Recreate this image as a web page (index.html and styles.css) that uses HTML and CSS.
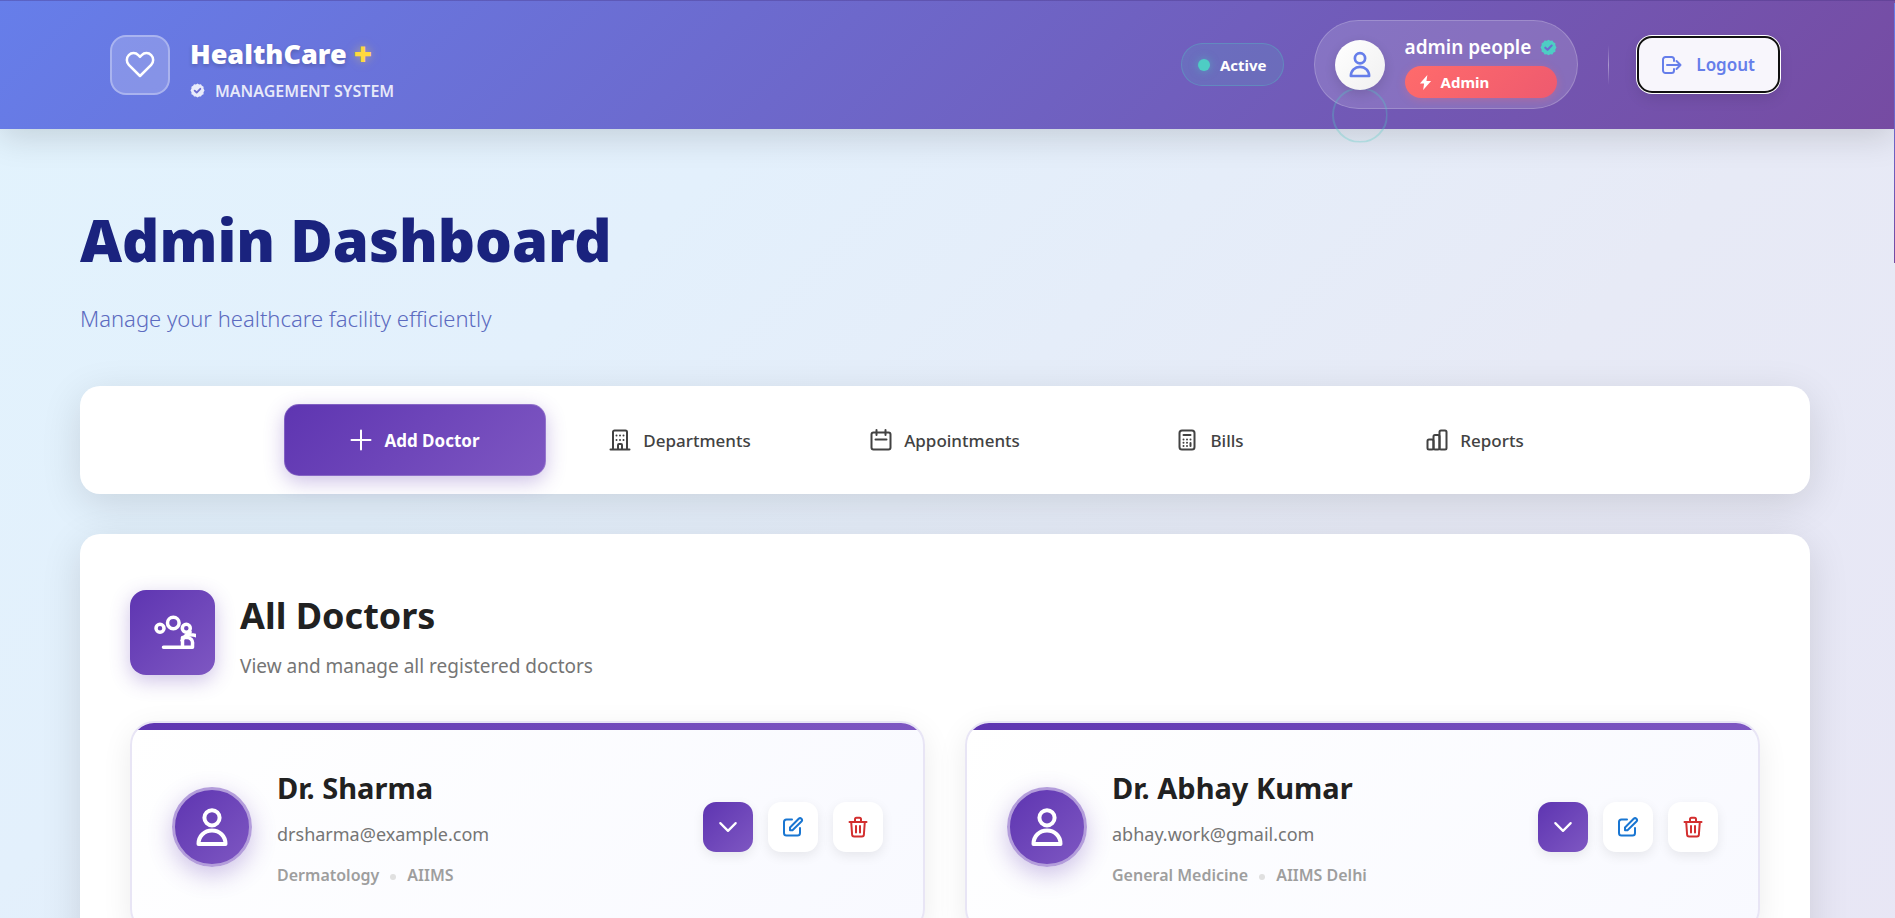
FILE: index.html
```html
<!DOCTYPE html>
<html lang="en">
<head>
<meta charset="utf-8">
<title>Admin Dashboard</title>
<link rel="stylesheet" href="styles.css">
</head>
<body>
<svg class="sprite" aria-hidden="true">
  <defs>
    <symbol id="i-user" viewBox="0 0 32 40"><circle cx="16" cy="10.800" r="7.600"/><path d="M2.500 37C2.500 29 8.500 23.500 16 23.500S29.500 29 29.500 37Z"/></symbol>
    <symbol id="i-check" viewBox="0 0 16 16"><path class="solid" d="M8 .6l1.700 1 2-.3 1 1.700 1.800.9-.1 2L15.500 8l-1.100 1.900.1 2-1.800.9-1 1.700-2-.2L8 15.400l-1.700-1.100-2 .2-1-1.700-1.800-.9.1-2L.5 8l1.100-2.100-.1-2L3.300 3l1-1.700 2 .3z"/><path class="tick" d="M5 8.200l2.100 2 3.900-4"/></symbol>
    <symbol id="i-down" viewBox="0 0 20 20"><path d="M3 6.500l7 7 7-7"/></symbol>
    <symbol id="i-edit" viewBox="0 0 22 22"><path d="M10 3.500H4.500A2.500 2.500 0 0 0 2 6v11a2.500 2.500 0 0 0 2.500 2.500h11A2.500 2.500 0 0 0 18 17V12"/><path d="M8 11.500l8.700-8.700a1.900 1.900 0 0 1 2.700 2.700L10.500 14.200H8z"/></symbol>
    <symbol id="i-trash" viewBox="0 0 20 22"><path d="M1.500 6h17M3.200 6l.9 12.500a2 2 0 0 0 2 2h7.800a2 2 0 0 0 2-2L16.800 6M7 6V3.200a1.500 1.500 0 0 1 1.500-1.500h3A1.500 1.500 0 0 1 13 3.200V6M8 10v6.500M12 10v6.500"/></symbol>
  </defs>
</svg>

<header class="topbar">
  <div class="brand">
    <div class="brand-icon">
      <svg viewBox="0 0 30 27"><path d="M15 25L3.800 13.800a7 7 0 0 1 0-9.700 6.600 6.600 0 0 1 9.500 0L15 5.800l1.700-1.700a6.600 6.600 0 0 1 9.500 0 7 7 0 0 1 0 9.700z"/></svg>
    </div>
    <div class="brand-text">
      <div class="brand-name">HealthCare <span class="plus">+</span></div>
      <div class="brand-sub"><svg><use href="#i-check"/></svg>MANAGEMENT SYSTEM</div>
    </div>
  </div>
  <div class="account">
    <div class="status"><span class="status-dot"></span>Active</div>
    <div class="profile">
      <div class="profile-pic"><svg><use href="#i-user"/></svg></div>
      <div class="profile-info">
        <div class="profile-name">admin people <svg><use href="#i-check"/></svg></div>
        <div class="role"><svg viewBox="0 0 12 16"><path d="M8 0L0 9h4.500L3.500 16 12 6.500H7z"/></svg>Admin</div>
      </div>
    </div>
    <span class="divider"></span>
    <button class="logout" type="button">
      <svg viewBox="0 0 20 18"><path d="M12 5V3.500A2.500 2.500 0 0 0 9.500 1h-6A2.500 2.500 0 0 0 1 3.500v11A2.500 2.500 0 0 0 3.500 17h6a2.500 2.500 0 0 0 2.500-2.500V13M5 9h13.500M14.500 5l4 4-4 4"/></svg>Logout
    </button>
  </div>
</header>

<main class="page">
  <h1>Admin Dashboard</h1>
  <p class="lead">Manage your healthcare facility efficiently</p>

  <nav class="tabs">
    <div class="tabs-inner">
      <button class="tab active" type="button"><svg viewBox="0 0 22 22"><path d="M11 1.500v19M1.500 11h19"/></svg>Add Doctor</button>
      <button class="tab" type="button"><svg viewBox="0 0 22 22"><path d="M4 20.500V3a1.500 1.500 0 0 1 1.500-1.500h11A1.500 1.500 0 0 1 18 3v17.500M1.500 20.500h19M9 20.500V16a1 1 0 0 1 1-1h2a1 1 0 0 1 1 1v4.500"/><path class="dots" d="M7.500 6.500h.01M11 6.500h.01M14.500 6.500h.01M7.500 11h.01M11 11h.01M14.500 11h.01"/></svg>Departments</button>
      <button class="tab" type="button"><svg viewBox="0 0 22 22"><rect x="1.500" y="3.500" width="19" height="17" rx="2"/><path d="M6.500 1v5M15.500 1v5M5.500 10.500h11"/></svg>Appointments</button>
      <button class="tab" type="button"><svg viewBox="0 0 22 22"><rect x="3.500" y="1.500" width="15" height="19" rx="2.500"/><path d="M7.500 6h7"/><path class="dots" d="M7.500 10.500h.01M11 10.500h.01M14.500 10.500h.01M7.500 13.800h.01M11 13.800h.01M7.500 17h.01M11 17h.01M14.500 14v3"/></svg>Bills</button>
      <button class="tab" type="button"><svg viewBox="0 0 22 22"><rect x="1.500" y="10.500" width="6" height="10" rx="1.500"/><rect x="7.500" y="6" width="6" height="14.500" rx="1.500"/><rect x="13.500" y="1.500" width="7" height="19" rx="1.500"/></svg>Reports</button>
    </div>
  </nav>

  <section class="panel">
    <div class="panel-head">
      <div class="panel-icon">
        <svg viewBox="0 0 42 36"><circle cx="6" cy="13.300" r="4"/><circle cx="19.300" cy="8" r="5.800"/><circle cx="32.300" cy="13.300" r="4"/><path d="M9.500 32.300H38.500V29a5.500 5.500 0 0 0-5.500-6.500h-4.500v9.800M28 25.500C30.500 20.500 35 18 43 21M29 23l7-6"/></svg>
      </div>
      <div>
        <h2>All Doctors</h2>
        <p>View and manage all registered doctors</p>
      </div>
    </div>
    <div class="doctors">
      <article class="doctor">
        <div class="avatar"><svg><use href="#i-user"/></svg></div>
        <div class="doctor-info">
          <h3>Dr. Sharma</h3>
          <p class="email">drsharma@example.com</p>
          <p class="meta">Dermatology<span class="dot"></span>AIIMS</p>
        </div>
        <div class="actions">
          <button class="act primary" type="button" aria-label="Expand"><svg><use href="#i-down"/></svg></button>
          <button class="act edit" type="button" aria-label="Edit"><svg><use href="#i-edit"/></svg></button>
          <button class="act delete" type="button" aria-label="Delete"><svg><use href="#i-trash"/></svg></button>
        </div>
      </article>
      <article class="doctor">
        <div class="avatar"><svg><use href="#i-user"/></svg></div>
        <div class="doctor-info">
          <h3>Dr. Abhay Kumar</h3>
          <p class="email">abhay.work@gmail.com</p>
          <p class="meta">General Medicine<span class="dot"></span>AIIMS Delhi</p>
        </div>
        <div class="actions">
          <button class="act primary" type="button" aria-label="Expand"><svg><use href="#i-down"/></svg></button>
          <button class="act edit" type="button" aria-label="Edit"><svg><use href="#i-edit"/></svg></button>
          <button class="act delete" type="button" aria-label="Delete"><svg><use href="#i-trash"/></svg></button>
        </div>
      </article>
    </div>
  </section>
</main>
<div class="scroll-thumb"></div>
</body>
</html>
```

FILE: styles.css
```css
*, *::before { box-sizing: border-box; margin: 0; padding: 0; }

html { scrollbar-width: none; }

body {
  font-family: "Noto Sans", "Open Sans", sans-serif;
  color: #212121;
  background: linear-gradient(135deg, #e2f3fd 0%, #e3f0fc 30%, #e7eaf6 65%, #e8e6f5 100%);
}

button { font: inherit; border: 0; cursor: pointer; }
svg { display: block; fill: none; stroke: currentColor; stroke-width: 2; stroke-linecap: round; stroke-linejoin: round; }
.sprite { position: absolute; width: 0; height: 0; }
.solid { fill: currentColor; stroke: none; }
.tick { stroke: #6d6cd0; stroke-width: 2; }
.dots { stroke-width: 2; }

/* Top bar */
.topbar {
  display: flex;
  align-items: center;
  justify-content: space-between;
  height: 129px;
  padding: 0 117px 0 110px;
  background: linear-gradient(135deg, #667eea 0%, #764ba2 100%);
  box-shadow: inset 0 1px 0 rgba(70, 50, 130, 0.35), 0 8px 32px rgba(0, 0, 0, 0.14);
  color: #fff;
}
.brand { display: flex; align-items: center; gap: 20px; }
.brand-icon {
  display: grid;
  place-items: center;
  width: 60px;
  height: 60px;
  border: 2px solid rgba(255, 255, 255, 0.3);
  border-radius: 16px;
  background: rgba(255, 255, 255, 0.2);
}
.brand-icon svg { width: 30px; height: 27px; stroke-width: 2.500; }
.brand-text { padding-top: 7px; }
.brand-name { display: flex; align-items: center; gap: 7px; font-size: 27px; line-height: 40px; font-weight: 900; text-shadow: 0 2px 4px rgba(0, 0, 0, 0.2); }
.plus { color: #ffd93d; font-size: 32px; text-shadow: 0 0 10px rgba(255, 217, 61, 0.5); }
.brand-sub { display: flex; align-items: center; gap: 10px; margin-top: 5px; font-size: 16px; line-height: 24px; font-weight: 600; color: rgba(255, 255, 255, 0.85); }
.brand-sub svg { width: 15px; height: 15px; }

.account { display: flex; align-items: center; gap: 30px; }
.status {
  display: flex;
  align-items: center;
  gap: 10px;
  height: 43px;
  padding: 0 16px;
  border: 1px solid rgba(78, 205, 196, 0.3);
  border-radius: 22px;
  background: rgba(78, 205, 196, 0.14);
  font-size: 15px;
  font-weight: 700;
}
.status-dot { width: 12px; height: 12px; border-radius: 50%; background: #4ecdc4; box-shadow: 0 0 8px rgba(78, 205, 196, 0.5); }
.profile {
  display: flex;
  align-items: center;
  gap: 20px;
  height: 89px;
  padding: 0 20px;
  border: 1px solid rgba(255, 255, 255, 0.2);
  border-radius: 45px;
  background: rgba(255, 255, 255, 0.15);
}
.profile-pic {
  position: relative;
  display: grid;
  place-items: center;
  width: 50px;
  height: 50px;
  border-radius: 50%;
  background: linear-gradient(135deg, #fff, #f0f0f0);
  box-shadow: 0 4px 12px rgba(0, 0, 0, 0.12);
  color: #667eea;
}
.profile-pic::before {
  content: "";
  position: absolute;
  top: 47px;
  left: -3px;
  width: 56px;
  height: 56px;
  border: 2px solid rgba(78, 205, 196, 0.3);
  border-radius: 50%;
  clip-path: inset(3px 0 0 0);
}
.profile-pic svg { width: 22px; height: 27px; stroke-width: 4; }
.profile-info { display: grid; gap: 5px; padding-top: 2px; }
.profile-name { display: flex; align-items: center; gap: 9px; font-size: 19px; line-height: 28px; font-weight: 600; }
.profile-name svg { width: 17px; height: 17px; color: #4ecdc4; }
.role {
  display: flex;
  align-items: center;
  gap: 9px;
  height: 32px;
  padding: 0 14px;
  border-radius: 16px;
  background: linear-gradient(135deg, #ff6b6b, #ee5a6f);
  box-shadow: 0 2px 8px rgba(255, 107, 107, 0.3);
  font-size: 15px;
  font-weight: 700;
}
.role svg { width: 13px; height: 15px; fill: #fff; stroke: none; }
.divider { width: 1px; height: 40px; background: linear-gradient(to bottom, transparent, rgba(255, 255, 255, 0.4), transparent); }
.logout {
  display: flex;
  align-items: center;
  gap: 14px;
  height: 53px;
  padding: 0 23px;
  border-radius: 13px;
  background: #f8f6fc;
  outline: 2px solid #101010;
  box-shadow: 0 0 0 3px #fff, 0 6px 16px rgba(0, 0, 0, 0.12);
  color: #667eea;
  font-size: 17px;
  font-weight: 600;
}
.logout svg { width: 20px; height: 18px; }

/* Page */
.page { padding: 71px 85px 60px 80px; }
h1 { font-size: 58px; line-height: 80px; font-weight: 900; color: #1a237e; }
.lead { margin-top: 20px; font-size: 22px; line-height: 36px; font-weight: 300; color: #5c6bc0; }

.tabs {
  margin-top: 50px;
  padding: 18px;
  border-radius: 20px;
  background: #fff;
  box-shadow: 0 10px 40px rgba(0, 0, 0, 0.12);
}
.tabs-inner { display: grid; grid-template-columns: repeat(5, 1fr); gap: 3px; max-width: 1322px; margin: 0 auto; }
.tab {
  display: flex;
  align-items: center;
  justify-content: center;
  gap: 12px;
  height: 72px;
  border-radius: 15px;
  background: transparent;
  color: #424242;
  font-size: 17px;
  font-weight: 500;
}
.tab svg { width: 22px; height: 22px; }
.tab.active {
  border: 1px solid rgba(255, 255, 255, 0.2);
  background: linear-gradient(135deg, #5e35b1, #7e57c2) border-box;
  box-shadow: 0 6px 20px rgba(94, 53, 177, 0.3);
  color: #fff;
  font-weight: 700;
}

.panel {
  margin-top: 40px;
  padding: 50px;
  border-radius: 20px;
  background: #fff;
  box-shadow: 0 10px 40px rgba(0, 0, 0, 0.12);
}
.panel-head { display: flex; align-items: center; gap: 25px; }
.panel-icon {
  display: grid;
  place-items: center;
  width: 85px;
  height: 85px;
  border-radius: 16px;
  background: linear-gradient(135deg, #5e35b1, #7e57c2);
  box-shadow: 0 6px 20px rgba(94, 53, 177, 0.3);
  color: #fff;
}
.panel-icon svg { width: 42px; height: 36px; margin-left: 4px; stroke-width: 3.500; }
h2 { font-size: 36px; line-height: 64px; font-weight: 700; }
.panel-head p { margin-top: 3px; font-size: 19px; line-height: 30px; color: #757575; }

.doctors { display: grid; grid-template-columns: 1fr 1fr; gap: 40px; margin-top: 40px; }
.doctor {
  position: relative;
  display: flex;
  align-items: center;
  gap: 25px;
  padding: 40px;
  overflow: hidden;
  border: 2px solid #e8e5f5;
  border-radius: 24px;
  background: linear-gradient(135deg, #fff 0%, #f8f9ff 100%);
  box-shadow: 0 8px 30px rgba(0, 0, 0, 0.08);
}
.doctor::before {
  content: "";
  position: absolute;
  top: 0;
  left: 0;
  right: 0;
  height: 7px;
  background: linear-gradient(90deg, #5e35b1, #7e57c2);
}
.avatar {
  display: grid;
  place-items: center;
  width: 80px;
  height: 80px;
  border: 3px solid #b39ddb;
  border-radius: 50%;
  background: linear-gradient(135deg, #5e35b1, #7e57c2);
  box-shadow: 0 8px 24px rgba(94, 53, 177, 0.3);
  color: #fff;
}
.avatar svg { width: 32px; height: 40px; stroke-width: 4; }
.doctor-info { flex: 1; padding-bottom: 2px; }
h3 { font-size: 29px; line-height: 50px; font-weight: 700; }
.email { margin-top: 7px; font-size: 18px; line-height: 28px; color: #757575; }
.meta { display: flex; align-items: center; gap: 11px; margin-top: 13px; font-size: 16px; line-height: 28px; font-weight: 600; color: #9e9e9e; }
.dot { width: 6px; height: 6px; margin-top: 4px; border-radius: 50%; background: #e0e0e0; }
.actions { display: flex; gap: 15px; }
.act {
  display: grid;
  place-items: center;
  width: 50px;
  height: 50px;
  border-radius: 13px;
  background: #fff;
  box-shadow: 0 4px 12px rgba(0, 0, 0, 0.08);
}
.act svg { width: 22px; height: 22px; }
.act.primary { background: linear-gradient(135deg, #5e35b1, #7e57c2); color: #fff; }
.act.edit { color: #1976d2; }
.act.delete { color: #d32f2f; }

.scroll-thumb {
  position: fixed;
  top: 3px;
  right: 0;
  width: 1px;
  height: 260px;
  background: linear-gradient(#667eea, #764ba2);
}
```
